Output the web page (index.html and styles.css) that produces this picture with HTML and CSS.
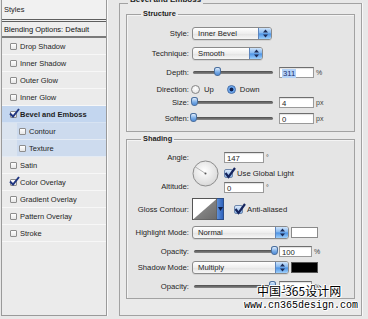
FILE: index.html
```html
<!DOCTYPE html>
<html lang="en">
  <head>
    <meta charset="UTF-8" />
    <meta name="viewport" content="width=device-width, initial-scale=1.0" />
    <title>Layer Style - Bevel and Emboss</title>
    <link rel="stylesheet" href="styles.css">
  </head>
  <body>
    <div class="dialog">
      <div class="styles-panel">
        <div class="panel-head">Styles</div>
        <div class="panel-blend">Blending Options: Default</div>
        <ul class="effects">
          <li class="effect"><span class="cb"></span>Drop Shadow</li>
          <li class="effect"><span class="cb"></span>Inner Shadow</li>
          <li class="effect"><span class="cb"></span>Outer Glow</li>
          <li class="effect"><span class="cb"></span>Inner Glow</li>
          <li class="effect active">
            <span class="cb on"><svg class="tick" width="11" height="10" viewBox="0 0 11 10"><path d="M1 5.5 L4 8.5 L10 1" fill="none" stroke="#1f3580" stroke-width="2"/></svg></span><b>Bevel and Emboss</b>
          </li>
          <li class="effect sub"><span class="sub-item"><span class="cb"></span>Contour</span></li>
          <li class="effect sub"><span class="sub-item"><span class="cb"></span>Texture</span></li>
          <li class="effect"><span class="cb"></span>Satin</li>
          <li class="effect">
            <span class="cb on"><svg class="tick" width="11" height="10" viewBox="0 0 11 10"><path d="M1 5.5 L4 8.5 L10 1" fill="none" stroke="#1f3580" stroke-width="2"/></svg></span>Color Overlay
          </li>
          <li class="effect"><span class="cb"></span>Gradient Overlay</li>
          <li class="effect"><span class="cb"></span>Pattern Overlay</li>
          <li class="effect"><span class="cb"></span>Stroke</li>
        </ul>
      </div>

      <fieldset class="group outer">
        <legend>Bevel and Emboss</legend>

        <fieldset class="group box structure">
          <legend>Structure</legend>

          <div class="row">
            <span class="lbl">Style:</span>
            <div class="popup style-popup">Inner Bevel<span class="popup-btn"><svg width="7" height="9" viewBox="0 0 7 9"><path d="M3.5 0.5 L6 3.5 H1Z M3.5 8.5 L6 5.5 H1Z" fill="#1d2b55"/></svg></span></div>
          </div>
          <div class="row">
            <span class="lbl">Technique:</span>
            <div class="popup tech-popup">Smooth<span class="popup-btn"><svg width="7" height="9" viewBox="0 0 7 9"><path d="M3.5 0.5 L6 3.5 H1Z M3.5 8.5 L6 5.5 H1Z" fill="#1d2b55"/></svg></span></div>
          </div>
          <div class="row row-depth">
            <span class="lbl">Depth:</span>
            <div class="slider"><span class="track"></span><span class="thumb" style="left: 31%"></span></div>
            <span class="field"><span class="sel">311</span></span><span class="unit">%</span>
          </div>
          <div class="row row-small row-dir">
            <span class="lbl">Direction:</span>
            <span class="radio"></span><span class="opt">Up</span>
            <span class="radio on"></span><span class="opt">Down</span>
          </div>
          <div class="row row-small row-size">
            <span class="lbl">Size:</span>
            <div class="slider"><span class="track"></span><span class="thumb" style="left: 2%"></span></div>
            <span class="field">4</span><span class="unit">px</span>
          </div>
          <div class="row row-small row-soften">
            <span class="lbl">Soften:</span>
            <div class="slider"><span class="track"></span><span class="thumb" style="left: 0%"></span></div>
            <span class="field">0</span><span class="unit">px</span>
          </div>
        </fieldset>

        <fieldset class="group box shading">
          <legend>Shading</legend>

          <div class="angle-block">
            <div class="angle-labels">
              <span class="lbl">Angle:</span>
              <span class="lbl">Altitude:</span>
            </div>
            <svg class="dial" width="27" height="27" viewBox="0 0 27 27">
              <defs>
                <radialGradient id="dialFill" cx="45%" cy="40%" r="65%">
                  <stop offset="0" stop-color="#ffffff"/>
                  <stop offset="1" stop-color="#d6d6d6"/>
                </radialGradient>
              </defs>
              <circle cx="13.5" cy="13.5" r="12.5" fill="url(#dialFill)" stroke="#8c8c8c"/>
              <line x1="13.5" y1="13.5" x2="3.2" y2="6.8" stroke="#b5b5b5" stroke-width="1"/>
              <circle cx="13.5" cy="13.5" r="1" fill="#555"/>
            </svg>
            <div class="angle-fields">
              <div class="line"><span class="field wide">147</span><span class="unit">°</span></div>
              <div class="line check-line">
                <span class="check on"><svg class="tick big" width="12" height="12" viewBox="0 0 12 12"><path d="M1.5 6 L4.5 10 L11 1" fill="none" stroke="#15255e" stroke-width="2.2"/></svg></span>
                <span class="opt">Use Global Light</span>
              </div>
              <div class="line"><span class="field wide">0</span><span class="unit">°</span></div>
            </div>
          </div>

          <div class="row row-gloss">
            <span class="lbl">Gloss Contour:</span>
            <span class="contour">
              <svg width="25" height="22" viewBox="0 0 25 22">
                <defs>
                  <linearGradient id="contourFill" x1="0" y1="0" x2="1" y2="1">
                    <stop offset="0" stop-color="#9a9a9a"/>
                    <stop offset="1" stop-color="#6a6a6a"/>
                  </linearGradient>
                </defs>
                <rect x="0.5" y="0.5" width="24" height="21" fill="#fff" stroke="#555"/>
                <path d="M1 21.5 L24.5 1 L24.5 21.5Z" fill="url(#contourFill)"/>
              </svg>
              <span class="contour-btn"><svg width="5" height="4" viewBox="0 0 5 4"><path d="M0 0 H5 L2.5 4Z" fill="#0c1b45"/></svg></span>
            </span>
            <span class="check on"><svg class="tick big" width="12" height="12" viewBox="0 0 12 12"><path d="M1.5 6 L4.5 10 L11 1" fill="none" stroke="#15255e" stroke-width="2.2"/></svg></span>
            <span class="opt">Anti-aliased</span>
          </div>
          <div class="row row-mode">
            <span class="lbl">Highlight Mode:</span>
            <div class="popup mode-popup">Normal<span class="popup-btn"><svg width="7" height="9" viewBox="0 0 7 9"><path d="M3.5 0.5 L6 3.5 H1Z M3.5 8.5 L6 5.5 H1Z" fill="#1d2b55"/></svg></span></div>
            <span class="swatch white"></span>
          </div>
          <div class="row row-opacity">
            <span class="lbl">Opacity:</span>
            <div class="slider"><span class="track"></span><span class="thumb" style="left: 100%"></span></div>
            <span class="field short">100</span><span class="unit">%</span>
          </div>
          <div class="row row-mode2">
            <span class="lbl">Shadow Mode:</span>
            <div class="popup mode-popup">Multiply<span class="popup-btn"><svg width="7" height="9" viewBox="0 0 7 9"><path d="M3.5 0.5 L6 3.5 H1Z M3.5 8.5 L6 5.5 H1Z" fill="#1d2b55"/></svg></span></div>
            <span class="swatch black"></span>
          </div>
          <div class="row row-opacity2">
            <span class="lbl">Opacity:</span>
            <div class="slider"><span class="track"></span><span class="thumb" style="left: 98%"></span></div>
            <span class="field short">100</span><span class="unit">%</span>
          </div>
        </fieldset>
      </fieldset>
    </div>

    <div class="watermark">
      <div class="wm-cn">中国-365设计网</div>
      <div class="wm-url">www.cn365design.com</div>
    </div>
  </body>
</html>
```

FILE: styles.css
```css
body {
  margin: 0;
  background: #e8e8e8;
  font-family: "Liberation Sans", Arial, sans-serif;
  font-size: 7.7px;
  color: #1e1e1e;
  overflow: hidden;
}
.dialog {
  display: flex;
  align-items: flex-start;
  position: relative;
  height: 319px;
}

/* left: styles list */
.styles-panel {
  width: 104px;
  height: 315px;
  margin-left: 1px;
  box-sizing: content-box;
  border: 1px solid #9a9a9a;
  border-top: 0;
  background: #ebebeb;
  box-shadow: 1px 0 0 #fafafa;
  font-size: 7.5px;
}
.panel-head {
  height: 19px;
  line-height: 20px;
  padding-left: 2px;
  background: #f1f1f1;
  border-bottom: 3px double #5e5e5e;
}
.panel-blend {
  height: 14px;
  line-height: 15px;
  padding-left: 2px;
  background: #eeeeee;
  border-bottom: 2px solid #7a7a7a;
  color: #111;
}
.effects {
  list-style: none;
  margin: 0;
  padding: 0;
}
.effect {
  display: flex;
  align-items: center;
  height: 16px;
  padding-left: 8px;
  border-bottom: 1px solid #f7f7f7;
}
.effect.active {
  background: #c3d6ef;
  border-bottom-color: #d7e3f2;
}
.effect.sub {
  padding-left: 15px;
  background: #dbe4ef;
  border-bottom-color: #e4ebf4;
}
.sub-item {
  display: flex;
  align-items: center;
  align-self: stretch;
  flex: 1;
  padding-left: 2px;
  background: #cddbee;
}
.cb {
  position: relative;
  display: inline-block;
  width: 5px;
  height: 5px;
  margin-right: 3px;
  border: 1px solid #8d8d8d;
  border-radius: 1px;
  background: linear-gradient(#ffffff, #e6e6e6);
}
.tick {
  position: absolute;
  left: -2px;
  top: -4px;
}

/* right: bevel and emboss */
.group {
  margin: 0;
  min-width: 0;
  box-sizing: border-box;
  border: 1px solid #a2a2a2;
}
.group > legend {
  font-weight: bold;
  line-height: 10px;
  padding: 0 2px;
}
.outer {
  width: 243px;
  margin-left: 12px;
  margin-top: -5px;
  padding: 0 6px 16px;
  background: #eaeaea;
  box-shadow: 1px 0 0 #f8f8f8;
}
.outer > legend {
  font-size: 8px;
  padding-bottom: 6px;
  margin-left: 2px;
}
.box {
  padding: 0;
  background: #e5e5e5;
  box-shadow: inset 1px 1px 0 #f4f4f4;
}
.box > legend {
  font-size: 7.4px;
  margin-left: 14px;
}
.structure {
  margin-top: -2px;
  padding: 7px 0 7px;
}
.shading {
  margin-top: 2px;
  padding: 8px 0 6px;
}

.row {
  display: flex;
  align-items: center;
  height: 14px;
  margin-top: 6px;
}
.structure .row:first-of-type {
  margin-top: 0;
}
.row-depth { margin-top: 5px; }
.row-small { height: 12px; }
.row-dir { margin-top: 4px; }
.row-size { margin-top: 1px; }
.row-soften { margin-top: 4px; }
.lbl {
  width: 62px;
  flex: none;
  text-align: right;
  white-space: nowrap;
}

.popup {
  display: flex;
  align-items: center;
  height: 13px;
  margin-left: 3px;
  padding-left: 5px;
  box-sizing: border-box;
  border: 1px solid #8b8b8b;
  border-radius: 3px;
  background: linear-gradient(#ffffff, #eeeeee 50%, #e2e2e2 51%, #f7f7f7);
  box-shadow: 0 1px 0 rgba(0, 0, 0, 0.08);
}
.style-popup { width: 80px; }
.tech-popup { width: 71px; }
.mode-popup { width: 97px; }
.popup-btn {
  display: flex;
  align-items: center;
  justify-content: center;
  align-self: stretch;
  width: 12px;
  margin-left: auto;
  border-left: 1px solid #5d85bd;
  border-radius: 0 2px 2px 0;
  background: linear-gradient(#cfe4fb, #7fb4ee 48%, #4a91e4 52%, #9fd0fb);
}

.slider {
  position: relative;
  display: flex;
  align-items: center;
  width: 80px;
  height: 10px;
  margin-left: 4px;
}
.track {
  flex: 1;
  height: 3px;
  border-radius: 2px;
  background: linear-gradient(#4c4c4c, #8a8a8a);
}
.thumb {
  position: absolute;
  top: 0;
  width: 7px;
  height: 9px;
  margin-left: -3.5px;
  border-radius: 3px 3px 4px 4px / 3px 3px 5px 5px;
  border: 1px solid #4a6f9e;
  box-sizing: border-box;
  background: linear-gradient(#e2efff, #7fb0e8 55%, #4e8ad6);
}

.field {
  display: inline-block;
  width: 35px;
  height: 11px;
  line-height: 11px;
  margin-left: 6px;
  padding-left: 2px;
  box-sizing: border-box;
  border: 1px solid #9a9a9a;
  border-top-color: #6e6e6e;
  background: #fff;
  box-shadow: inset 0 1px 1px rgba(0, 0, 0, 0.12);
}
.field.short { width: 33px; }
.field.wide { width: 40px; margin-left: 0; }
.sel {
  background: #b4d2f7;
  padding: 0 1px;
  color: #1a2f6e;
}
.unit {
  margin-left: 2px;
  color: #444;
  font-size: 7px;
}

.radio {
  width: 9px;
  height: 9px;
  margin-left: 2px;
  box-sizing: border-box;
  border: 1px solid #858585;
  border-radius: 50%;
  background: radial-gradient(circle at 50% 35%, #ffffff, #dedede);
}
.radio.on {
  margin-left: 13px;
  border-color: #3f6ba8;
  background: radial-gradient(circle, #10214f 0 1.6px, #5d9ae6 2.2px, #a9cff8);
}
.opt {
  margin-left: 4px;
  white-space: nowrap;
}

.angle-block {
  display: flex;
  height: 41px;
}
.angle-labels {
  display: flex;
  flex-direction: column;
  justify-content: space-between;
  padding: 1px 0 2px;
}
.dial {
  margin: 8px 0 0 3px;
}
.angle-fields {
  display: flex;
  flex-direction: column;
  margin-left: 5px;
}
.angle-fields .line {
  display: flex;
  align-items: center;
  height: 11px;
}
.angle-fields .check-line {
  height: 10px;
  margin: 5px 0 4px;
}
.check {
  position: relative;
  flex: none;
  width: 9px;
  height: 9px;
  box-sizing: border-box;
  border: 1px solid #6f88ad;
  border-radius: 2px;
  background: linear-gradient(#dbe9fb, #8db8ea);
}
.tick.big {
  left: -1px;
  top: -3px;
}

.row-gloss {
  height: 22px;
  margin-top: 5px;
}
.contour {
  display: flex;
  margin-left: 3px;
}
.contour svg {
  display: block;
}
.contour-btn {
  display: flex;
  align-items: flex-end;
  justify-content: center;
  width: 7px;
  padding-bottom: 8px;
  box-sizing: border-box;
  background: linear-gradient(90deg, #5f8fd6, #2f63bd);
  border: 1px solid #2d4f8a;
  border-left: 0;
}
.row-gloss .check {
  margin-left: 10px;
}
.row-mode {
  height: 12px;
  margin-top: 6px;
}
.row-opacity {
  height: 12px;
  margin-top: 7px;
}
.row-mode2 {
  height: 13px;
  margin-top: 4px;
}
.row-opacity2 {
  height: 12px;
  margin-top: 6px;
}
.shading .slider { margin-left: 5px; }
.shading .field.short { margin-left: 5px; }
.swatch {
  width: 27px;
  height: 11px;
  margin-left: 2px;
  box-sizing: border-box;
  border: 1px solid #8a8a8a;
}
.swatch.white { background: #fff; }
.swatch.black { background: #000; border-color: #555; }

/* watermark sits over the dialog corner */
.watermark {
  position: absolute;
  left: 244px;
  top: 284px;
  color: #000;
  text-shadow: 1px 0 #fff, -1px 0 #fff, 0 1px #fff, 0 -1px #fff, 1px 1px #fff, -1px -1px #fff;
}
.wm-cn {
  margin-left: 13px;
  font-family: "Noto Sans CJK SC", "Noto Sans", sans-serif;
  font-size: 12px;
  line-height: 14px;
}
.wm-url {
  margin-top: 2px;
  font-family: "Liberation Mono", monospace;
  font-size: 10px;
  line-height: 11px;
}
```
